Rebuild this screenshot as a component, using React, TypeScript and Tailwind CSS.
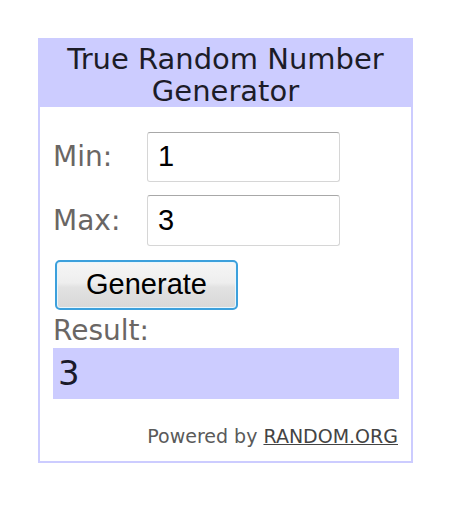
import React from "react";

export default function App() {
  const verdana = { fontFamily: '"DejaVu Sans", Verdana, sans-serif' };
  const arial = { fontFamily: '"Liberation Sans", Arial, sans-serif' };
  return (
    <div className="w-[452px] h-[508px] bg-white overflow-hidden">
      <div
        className="ml-[38px] mt-[38px] w-[375px] h-[425px] border-2 border-[#ccccff] flex flex-col"
        style={verdana}
      >
        <div className="bg-[#ccccff] h-[67px] pt-[3px] text-center text-[29px] leading-[32px] text-[#1c1c28]">
          True Random Number
          <br />
          Generator
        </div>
        <div className="flex flex-col pl-[13px] pr-[12px]">
          <div className="flex items-center mt-[25px]">
            <span className="w-[94px] text-[28px] leading-[32px] text-[#6a6664]">Min:</span>
            <div
              className="w-[193px] h-[50px] rounded-[3px] border border-[#d6d6d6] border-t-[#a8a8a8] flex items-center pl-[10px] text-[29px] text-black"
              style={arial}
            >
              1
            </div>
          </div>
          <div className="flex items-center mt-[13px]">
            <span className="w-[94px] text-[28px] leading-[32px] text-[#6a6664]">Max:</span>
            <div
              className="w-[193px] h-[51px] rounded-[3px] border border-[#d6d6d6] border-t-[#a8a8a8] flex items-center pl-[10px] text-[29px] text-black"
              style={arial}
            >
              3
            </div>
          </div>
          <div className="mt-[14px] ml-[2px]">
            <div
              className="w-[183px] h-[50px] rounded-[5px] border-2 border-[#3ca0dc] bg-[linear-gradient(to_bottom,#f6f6f6_0%,#eeeeee_45%,#e2e2e2_55%,#d8d8d8_100%)] flex items-center justify-center text-[29px] text-black shadow-[inset_0_0_0_1px_#e8f6fd]"
              style={arial}
            >
              Generate
            </div>
          </div>
          <div className="mt-[5px] text-[28px] leading-[32px] text-[#6a6664]">Result:</div>
          <div className="mt-[1px] w-[346px] h-[51px] bg-[#ccccff] flex items-center pl-[5px] text-[34px] text-[#1a1a2a]">
            3
          </div>
          <div className="mt-[26px] text-right text-[19px] leading-[22px] text-[#5a5a5a] pr-[1px]">
            Powered by{" "}
            <span className="underline text-[#444]">RANDOM.ORG</span>
          </div>
        </div>
      </div>
    </div>
  );
}
